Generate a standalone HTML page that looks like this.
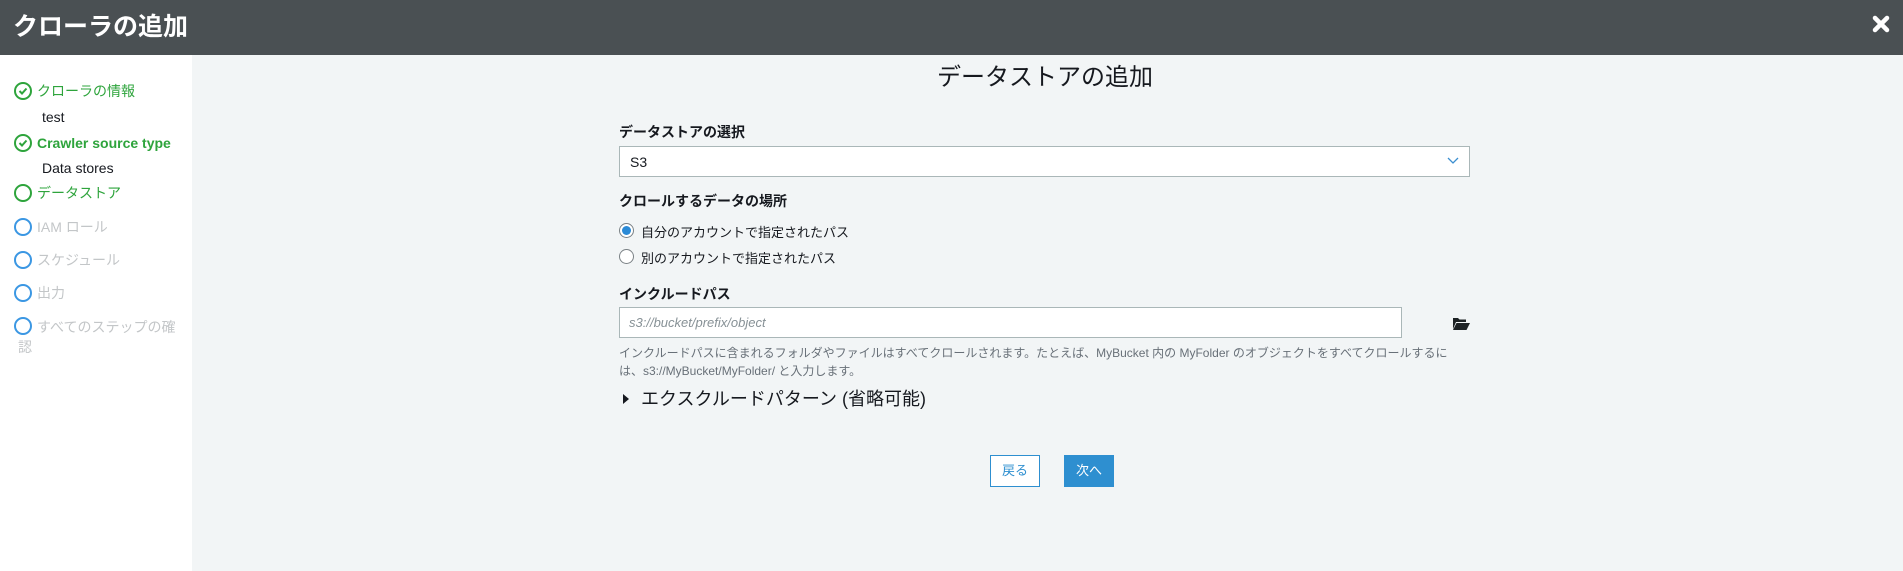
<!DOCTYPE html>
<html><head><meta charset="utf-8"><style>
*{margin:0;padding:0;box-sizing:border-box}
body{width:1903px;height:571px;overflow:hidden;background:#f2f5f6;font-family:"Liberation Sans","Noto Sans CJK JP",sans-serif;position:relative;color:#16191f}
.hdr{position:absolute;left:0;top:0;width:1903px;height:55px;background:#4a5053}
.hdr h1{position:absolute;left:13px;top:12px;font-size:25px;color:#fff;font-weight:bold;line-height:30px}
.side{position:absolute;left:0;top:55px;width:192px;height:516px;background:#fff}
.it{position:absolute;left:37px;font-size:14px;line-height:18px}
.c{position:absolute;left:14px;width:18px;height:18px;border-radius:50%;border:2px solid #3b97e3}
.g{color:#2ea43c}.gc{border-color:#2ea43c}.gr{color:#c3c6c8}
.a{position:absolute}
.lbl{font-size:14px;font-weight:bold;color:#16191f}
</style></head><body>
<div class="hdr"><h1>クローラの追加</h1>
<svg class="a" style="left:1872px;top:15px" width="18" height="18" viewBox="0 0 18 18"><path d="M3 3L15 15M15 3L3 15" stroke="#fff" stroke-width="4.5" stroke-linecap="round"/></svg></div>
<div class="side"></div>
<div class="c gc" style="top:82px"></div><svg class="a" style="left:18px;top:86px" width="10" height="10"><path d="M1.5 5L4 7.5L8.5 2.5" stroke="#2ea43c" stroke-width="2" fill="none"/></svg>
<div class="it g" style="top:82px">クローラの情報</div>
<div class="it" style="top:108px;left:42px;color:#16191f">test</div>
<div class="c gc" style="top:134px"></div><svg class="a" style="left:18px;top:138px" width="10" height="10"><path d="M1.5 5L4 7.5L8.5 2.5" stroke="#2ea43c" stroke-width="2" fill="none"/></svg>
<div class="it g" style="top:134px;font-weight:bold">Crawler source type</div>
<div class="it" style="top:159px;left:42px">Data stores</div>
<div class="c gc" style="top:184px"></div><div class="it g" style="top:184px">データストア</div>
<div class="c" style="top:218px"></div><div class="it gr" style="top:218px">IAM ロール</div>
<div class="c" style="top:251px"></div><div class="it gr" style="top:251px">スケジュール</div>
<div class="c" style="top:284px"></div><div class="it gr" style="top:284px">出力</div>
<div class="c" style="top:317px"></div><div class="it gr" style="top:317px;width:150px;line-height:20px">すべてのステップの確<br><span style="margin-left:-19px">認</span></div>

<div class="a" style="left:620px;width:850px;top:63px;text-align:center;font-size:24px;line-height:30px">データストアの追加</div>
<div class="a lbl" style="left:619px;top:122px">データストアの選択</div>
<div class="a" style="left:619px;top:146px;width:851px;height:31px;background:#fff;border:1px solid #aab7b8;font-size:14px;padding:7px 10px">S3</div>
<svg class="a" style="left:1447px;top:157px" width="12" height="8"><path d="M1 1L6 6L11 1" stroke="#3b8fd0" stroke-width="1.3" fill="none"/></svg>
<div class="a lbl" style="left:619px;top:191px">クロールするデータの場所</div>
<div class="a" style="left:619px;top:223px;width:15px;height:15px;border-radius:50%;border:1px solid #7a8185;background:#fff"><div style="margin:2px;width:9px;height:9px;border-radius:50%;background:#2b8ad6"></div></div>
<div class="a" style="left:641px;top:222px;font-size:13px">自分のアカウントで指定されたパス</div>
<div class="a" style="left:619px;top:249px;width:15px;height:15px;border-radius:50%;border:1px solid #7a8185;background:#fff"></div>
<div class="a" style="left:641px;top:248px;font-size:13px">別のアカウントで指定されたパス</div>
<div class="a lbl" style="left:619px;top:284px">インクルードパス</div>
<div class="a" style="left:619px;top:307px;width:783px;height:31px;background:#fff;border:1px solid #aab7b8;font-size:13px;padding:7px 9px;color:#879196;font-style:italic">s3://bucket/prefix/object</div>
<svg class="a" style="left:1453px;top:317px" width="17" height="13" viewBox="0 0 17 13"><path d="M0 1h5l1.5 1.5H13V5H3L0 12Z" fill="#1d2224"/><path d="M3.5 6H17L13.5 13H0Z" fill="#1d2224"/></svg>
<div class="a" style="left:619px;top:344px;width:840px;font-size:12px;line-height:18px;color:#687078">インクルードパスに含まれるフォルダやファイルはすべてクロールされます。たとえば、MyBucket 内の MyFolder のオブジェクトをすべてクロールするに<br>は、s3://MyBucket/MyFolder/ と入力します。</div>
<svg class="a" style="left:623px;top:394px" width="6" height="10"><path d="M0 0L6 5L0 10Z" fill="#16191f"/></svg>
<div class="a" style="left:641px;top:388px;font-size:18px;line-height:22px">エクスクルードパターン (省略可能)</div>
<div class="a" style="left:990px;top:455px;width:50px;height:32px;border:1px solid #2e8fd0;background:#fff;color:#2e8fd0;font-size:13px;text-align:center;line-height:30px">戻る</div>
<div class="a" style="left:1064px;top:455px;width:50px;height:32px;background:#2e8fd0;color:#fff;font-size:13px;text-align:center;line-height:32px">次へ</div>
</body></html>
